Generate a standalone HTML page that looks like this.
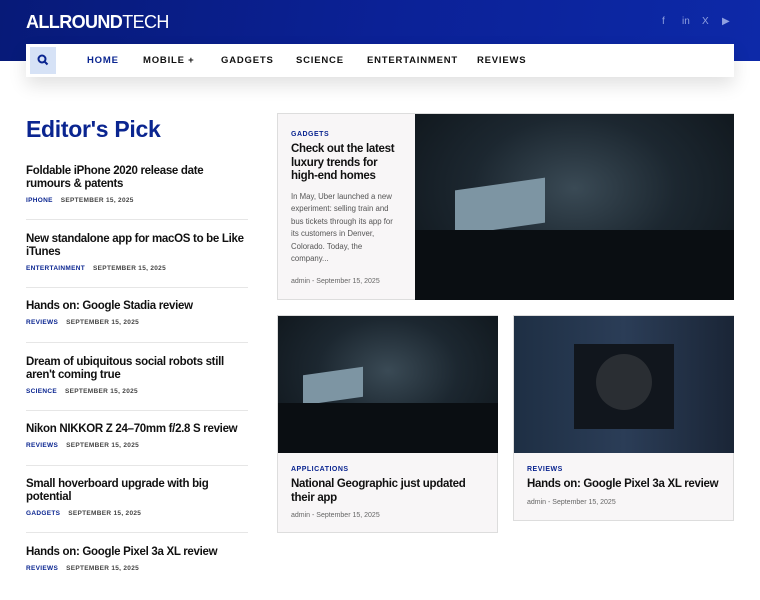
<!DOCTYPE html>
<html><head><meta charset="utf-8"><style>
*{margin:0;padding:0;box-sizing:border-box}
body{width:760px;height:600px;overflow:hidden;background:#fff;font-family:"Liberation Sans",sans-serif;position:relative}
.hdr{position:absolute;left:0;top:0;width:760px;height:61px;background:linear-gradient(100deg,#071a78 0%,#0b2196 50%,#0d29a8 100%)}
.logo{position:absolute;left:26px;top:12px;color:#fff;font-size:18px;letter-spacing:-0.6px}
.logo b{font-weight:700}
.soc{position:absolute;top:16px;color:#8fa0e0;font-size:10px}
.nav{position:absolute;left:26px;top:44px;width:708px;height:33px;background:#fff;box-shadow:0 8px 18px rgba(0,0,0,.12)}
.srch{position:absolute;left:4px;top:3px;width:26px;height:27px;background:#d6e2f6}
.nav a{position:absolute;top:11px;font-size:9.5px;font-weight:700;letter-spacing:.8px;color:#111;text-decoration:none}
h1{position:absolute;left:26px;top:116px;font-size:23px;color:#0a2590;font-weight:700;letter-spacing:-0.3px}
.it{position:absolute;left:26px;width:222px}
.it h3{font-size:11.5px;font-weight:700;color:#111;line-height:13px;letter-spacing:-0.3px}
.it .m{font-size:6.5px;font-weight:700;margin-top:6px;color:#444;letter-spacing:.3px}
.it .m span{color:#0a2590;margin-right:8px}
.hr{position:absolute;left:26px;width:222px;height:1px;background:#e6e6e6}
.card{position:absolute;background:#f8f6f7;border:1px solid #ddd}
.img{position:absolute;background:radial-gradient(ellipse at 50% 40%,#3a4a55 0%,#1c2730 45%,#0d1318 100%)}
.cat{font-size:7px;font-weight:700;color:#0a2590;letter-spacing:.5px}
.ct{font-size:11.5px;font-weight:700;color:#111;line-height:13.5px;margin-top:5px;letter-spacing:-0.3px}
.meta{font-size:7px;color:#666}
</style></head><body>
<div class="hdr">
<div class="logo"><b>ALLROUND</b>TECH</div>
<div class="soc" style="left:662px">f</div><div class="soc" style="left:682px">in</div><div class="soc" style="left:702px">X</div><div class="soc" style="left:722px">▶</div>
</div>
<div class="nav"><div class="srch"><svg width="26" height="27" viewBox="0 0 26 27"><circle cx="12" cy="12" r="3.5" stroke="#0a2590" stroke-width="2" fill="none"/><path d="M14.5 14.5l3 3" stroke="#0a2590" stroke-width="2"/></svg></div>
<a style="left:61px;color:#0a2590">HOME</a><a style="left:117px">MOBILE +</a><a style="left:195px">GADGETS</a><a style="left:270px">SCIENCE</a><a style="left:341px">ENTERTAINMENT</a><a style="left:451px">REVIEWS</a></div>
<h1>Editor's Pick</h1>
<div class="it" style="top:165px"><h3>Foldable iPhone 2020 release date rumours &amp; patents</h3><div class="m"><span>IPHONE</span>SEPTEMBER 15, 2025</div></div>
<div class="hr" style="top:219px"></div>
<div class="it" style="top:233px"><h3>New standalone app for macOS to be Like iTunes</h3><div class="m"><span>ENTERTAINMENT</span>SEPTEMBER 15, 2025</div></div>
<div class="hr" style="top:287px"></div>
<div class="it" style="top:300px"><h3>Hands on: Google Stadia review</h3><div class="m"><span>REVIEWS</span>SEPTEMBER 15, 2025</div></div>
<div class="hr" style="top:342px"></div>
<div class="it" style="top:356px"><h3>Dream of ubiquitous social robots still aren't coming true</h3><div class="m"><span>SCIENCE</span>SEPTEMBER 15, 2025</div></div>
<div class="hr" style="top:410px"></div>
<div class="it" style="top:423px"><h3>Nikon NIKKOR Z 24–70mm f/2.8 S review</h3><div class="m"><span>REVIEWS</span>SEPTEMBER 15, 2025</div></div>
<div class="hr" style="top:465px"></div>
<div class="it" style="top:478px"><h3>Small hoverboard upgrade with big potential</h3><div class="m"><span>GADGETS</span>SEPTEMBER 15, 2025</div></div>
<div class="hr" style="top:532px"></div>
<div class="it" style="top:546px"><h3>Hands on: Google Pixel 3a XL review</h3><div class="m"><span>REVIEWS</span>SEPTEMBER 15, 2025</div></div>

<div class="card" style="left:277px;top:113px;width:457px;height:187px">
<div style="position:absolute;left:13px;top:17px;width:108px"><div class="cat">GADGETS</div><div class="ct">Check out the latest luxury trends for high-end homes</div>
<div style="font-size:7.8px;color:#555;line-height:12.5px;margin-top:7px">In May, Uber launched a new experiment: selling train and bus tickets through its app for its customers in Denver, Colorado. Today, the company...</div>
<div class="meta" style="margin-top:12px">admin - September 15, 2025</div></div>
<div class="img" style="left:137px;top:0;width:319px;height:186px"><div style="position:absolute;left:40px;top:70px;width:90px;height:45px;background:#7d95a3;transform:skewY(-8deg)"></div><div style="position:absolute;left:0;bottom:0;width:100%;height:70px;background:#0a0e12"></div></div>
</div>
<div class="card" style="left:277px;top:315px;width:221px;height:218px">
<div class="img" style="left:0;top:0;width:220px;height:137px"><div style="position:absolute;left:25px;top:55px;width:60px;height:30px;background:#7d95a3;transform:skewY(-8deg)"></div><div style="position:absolute;left:0;bottom:0;width:100%;height:50px;background:#0a0e12"></div></div>
<div style="position:absolute;left:13px;top:150px;width:195px"><div class="cat">APPLICATIONS</div><div class="ct">National Geographic just updated their app</div><div class="meta" style="margin-top:7px">admin - September 15, 2025</div></div>
</div>
<div class="card" style="left:513px;top:315px;width:221px;height:206px">
<div class="img" style="left:0;top:0;width:220px;height:137px;background:linear-gradient(90deg,#1e2f44,#2b3d57 50%,#1a2536)"><div style="position:absolute;left:60px;top:28px;width:100px;height:85px;background:#11161d"></div><div style="position:absolute;left:82px;top:38px;width:56px;height:56px;border-radius:50%;background:#2a2e33"></div></div>
<div style="position:absolute;left:13px;top:150px;width:200px"><div class="cat">REVIEWS</div><div class="ct">Hands on: Google Pixel 3a XL review</div><div class="meta" style="margin-top:7px">admin - September 15, 2025</div></div>
</div>
</body></html>
